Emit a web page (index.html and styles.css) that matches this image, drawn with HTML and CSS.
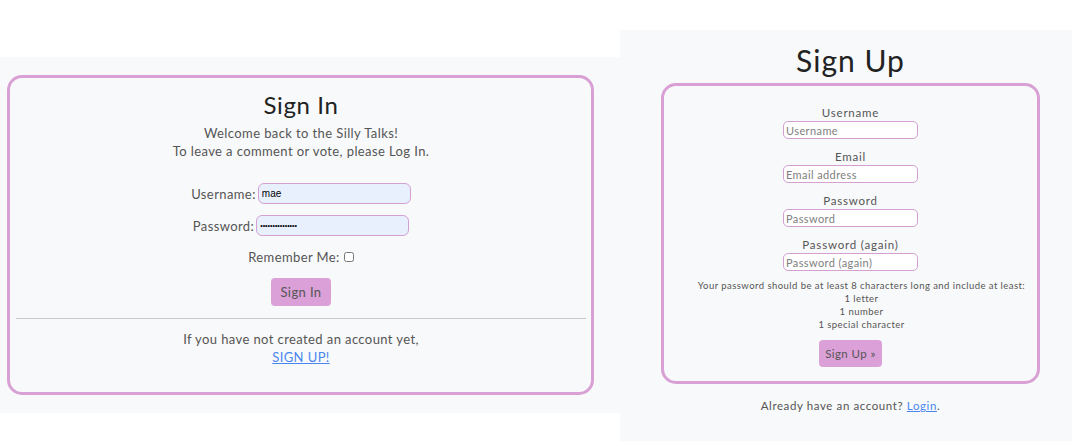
FILE: index.html
```html
<!DOCTYPE html>
<html lang="en">
<head>
<meta charset="utf-8">
<title>Silly Talks - Sign In / Sign Up</title>
<link rel="stylesheet" href="styles.css">
</head>
<body>
<div class="page">
  <section class="panel panel-in">
    <div class="card card-in">
      <h1 class="title-in">Sign In</h1>
      <p class="intro">Welcome back to the Silly Talks!<br>To leave a comment or vote, please Log In.</p>
      <form class="login-form">
        <div class="row"><label class="row-label">Username:</label><input class="field autofill" type="text" value="mae"></div>
        <div class="row"><label class="row-label">Password:</label><input class="field autofill pw" type="password" value="mypassword12345"></div>
        <div class="row remember"><label class="row-label">Remember Me:</label><input class="check" type="checkbox"></div>
        <button class="btn btn-in" type="button">Sign In</button>
      </form>
      <hr class="divider">
      <p class="outro">If you have not created an account yet,<br><a class="link" href="#">SIGN UP!</a></p>
    </div>
  </section>
  <section class="panel panel-up">
    <h1 class="title-up">Sign Up</h1>
    <div class="card card-up">
      <form class="signup-form">
        <div class="group"><label class="group-label">Username</label><input class="field-up" type="text" placeholder="Username"></div>
        <div class="group"><label class="group-label">Email</label><input class="field-up" type="text" placeholder="Email address"></div>
        <div class="group"><label class="group-label">Password</label><input class="field-up" type="password" placeholder="Password"></div>
        <div class="group"><label class="group-label">Password (again)</label><input class="field-up" type="password" placeholder="Password (again)"></div>
        <p class="help">Your password should be at least 8 characters long and include at least:<br>1 letter<br>1 number<br>1 special character</p>
        <button class="btn btn-up" type="button">Sign Up &raquo;</button>
      </form>
    </div>
    <p class="already">Already have an account? <a class="link" href="#">Login</a>.</p>
  </section>
</div>
</body>
</html>
```

FILE: styles.css
```css
* { box-sizing: border-box; }
html, body { margin: 0; padding: 0; background: #ffffff; }
body {
  font-family: "Lato", "Noto Sans", sans-serif;
  color: #555555;
  letter-spacing: 0.4px;
}
.page {
  display: flex;
  align-items: flex-start;
  width: 1072px;
  height: 447px;
}
.panel {
  background: #f8f9fa;
}
.panel-in {
  width: 620px;
  height: 356px;
  margin-top: 57px;
  padding: 18px 26px 0 7px;
}
.panel-up {
  width: 452px;
  height: 411px;
  margin-top: 30px;
  padding: 0 32px 0 41px;
  display: flex;
  flex-direction: column;
  align-items: center;
}
.card {
  border: 3px solid #d8a0d4;
  border-radius: 15px;
  text-align: center;
}
.card-in {
  width: 587px;
  height: 320px;
  padding: 13px 5px 0 6px;
}
.title-in {
  margin: 0;
  font-size: 24px;
  line-height: 28px;
  font-weight: 400;
  letter-spacing: 0.6px;
  color: #222222;
}
.intro {
  margin: 5px 0 0;
  font-size: 13px;
  line-height: 18px;
}
.login-form {
  margin-top: 23px;
  display: flex;
  flex-direction: column;
  align-items: center;
}
.row {
  display: flex;
  align-items: center;
  justify-content: center;
  gap: 2px;
  height: 21px;
  margin-bottom: 11px;
  font-size: 13px;
}
.row.remember { height: 14px; margin-top: 3px; margin-bottom: 14px; }
.field {
  width: 153px;
  height: 21px;
  border: 1px solid #d4a0d4;
  border-radius: 6px;
  padding: 0 3px;
  font-family: "Liberation Sans", sans-serif;
  font-size: 10px;
  letter-spacing: 0;
  color: #000;
  outline: none;
}
.autofill { background: #e8f0fe; }
.pw { font-size: 7px; }
.check {
  width: 10px;
  height: 10px;
  margin: 0 0 0 2px;
}
.btn {
  border: none;
  background: #dba0d8;
  border-radius: 4px;
  color: #555555;
  font-family: inherit;
  letter-spacing: 0.4px;
  cursor: pointer;
}
.btn-in {
  width: 60px;
  height: 28px;
  font-size: 13px;
}
.divider {
  margin: 12px 0 0;
  border: 0;
  border-top: 1px solid #c9c9c9;
}
.outro {
  margin: 11px 0 0;
  font-size: 13px;
  line-height: 18px;
}
.link { color: #4a86f0; text-decoration: underline; }
.title-up {
  margin: 12px 0 0;
  font-size: 30px;
  line-height: 36px;
  font-weight: 400;
  letter-spacing: 1px;
  color: #222222;
}
.card-up {
  width: 379px;
  height: 301px;
  margin-top: 5px;
  padding-top: 19px;
}
.signup-form {
  display: flex;
  flex-direction: column;
  align-items: center;
}
.group {
  display: flex;
  flex-direction: column;
  align-items: center;
  margin-bottom: 10px;
}
.group-label {
  font-size: 11.5px;
  line-height: 16px;
  letter-spacing: 0.8px;
  margin-bottom: 0;
}
.field-up {
  width: 135px;
  height: 18px;
  border: 1px solid #d4a0d4;
  border-radius: 5px;
  background: #ffffff;
  padding: 0 2px;
  font-family: inherit;
  font-size: 11px;
  letter-spacing: 0.4px;
  color: #333;
  outline: none;
}
.field-up::placeholder { color: #808080; }
.help {
  margin: -2px 0 0;
  padding-left: 22px;
  font-size: 9.5px;
  line-height: 13px;
  letter-spacing: 0.45px;
}
.btn-up {
  margin-top: 9px;
  width: 63px;
  height: 27px;
  font-size: 11.5px;
}
.already {
  margin: 15px 0 0;
  font-size: 11.5px;
  letter-spacing: 0.6px;
}
```
